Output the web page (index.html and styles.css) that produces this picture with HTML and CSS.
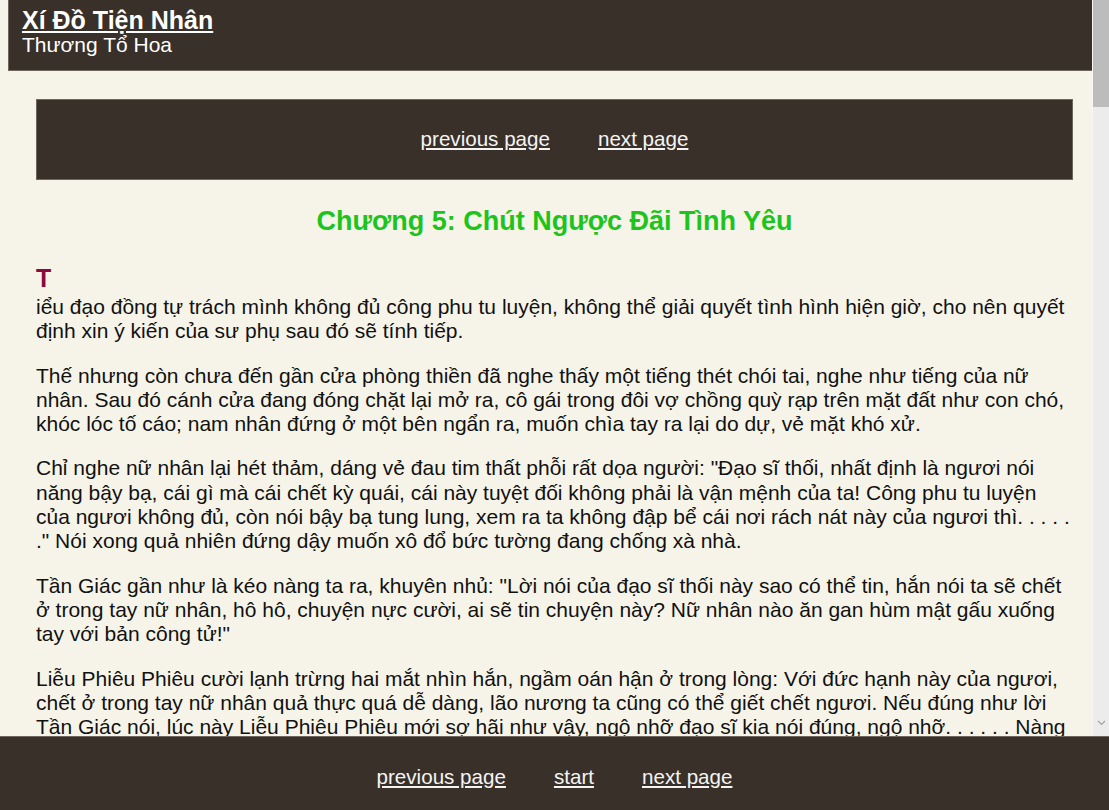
FILE: index.html
```html
<!DOCTYPE html>
<html lang="vi">
<head>
    <meta charset="UTF-8">
    <meta name="viewport" content="width=device-width, initial-scale=1.0">
    <title>Xí Đồ Tiện Nhân - Chương 5</title>
    <link rel="stylesheet" href="styles.css">
</head>
<body>
    <div class="viewport">
        <div class="page">
            <div class="header">
                <a class="book-title" href="#">Xí Đồ Tiện Nhân</a>
                <div class="author">Thương Tổ Hoa</div>
            </div>
            <div class="content">
                <div class="nav-box">
                    <a href="#">previous page</a>
                    <a href="#">next page</a>
                </div>
                <h2 class="chapter-title">Chương 5: Chút Ngược Đãi Tình Yêu</h2>
                <div class="chapter">
                    <p><span class="dropcap">T</span>iểu đạo đồng tự trách mình không đủ công phu tu luyện, không thể giải quyết tình hình hiện giờ, cho nên quyết định xin ý kiến của sư phụ sau đó sẽ tính tiếp.</p>
                    <p>Thế nhưng còn chưa đến gần cửa phòng thiền đã nghe thấy một tiếng thét chói tai, nghe như tiếng của nữ nhân. Sau đó cánh cửa đang đóng chặt lại mở ra, cô gái trong đôi vợ chồng quỳ rạp trên mặt đất như con chó, khóc lóc tố cáo; nam nhân đứng ở một bên ngẩn ra, muốn chìa tay ra lại do dự, vẻ mặt khó xử.</p>
                    <p>Chỉ nghe nữ nhân lại hét thảm, dáng vẻ đau tim thất phỗi rất dọa người: "Đạo sĩ thối, nhất định là ngươi nói năng bậy bạ, cái gì mà cái chết kỳ quái, cái này tuyệt đối không phải là vận mệnh của ta! Công phu tu luyện của ngươi không đủ, còn nói bậy bạ tung lung, xem ra ta không đập bể cái nơi rách nát này của ngươi thì. . . . . ." Nói xong quả nhiên đứng dậy muốn xô đổ bức tường đang chống xà nhà.</p>
                    <p>Tần Giác gần như là kéo nàng ta ra, khuyên nhủ: "Lời nói của đạo sĩ thối này sao có thể tin, hắn nói ta sẽ chết ở trong tay nữ nhân, hô hô, chuyện nực cười, ai sẽ tin chuyện này? Nữ nhân nào ăn gan hùm mật gấu xuống tay với bản công tử!"</p>
                    <p>Liễu Phiêu Phiêu cười lạnh trừng hai mắt nhìn hắn, ngầm oán hận ở trong lòng: Với đức hạnh này của ngươi, chết ở trong tay nữ nhân quả thực quá dễ dàng, lão nương ta cũng có thể giết chết ngươi. Nếu đúng như lời Tần Giác nói, lúc này Liễu Phiêu Phiêu mới sợ hãi như vậy, ngộ nhỡ đạo sĩ kia nói đúng, ngộ nhỡ. . . . . . Nàng không dám nghĩ tiếp nữa.</p>
                    <p>Tiểu đạo đồng đứng ở ngoài cửa, nhìn hai người kia ồn ào một hồi lâu, cuối cùng cũng không biết nên làm thế nào cho phải, đành phải lặng lẽ lui ra ngoài sân.</p>
                </div>
            </div>
        </div>
        <div class="scrollbar">
            <div class="scroll-thumb"></div>
            <svg class="scroll-arrow" width="9" height="6" viewBox="0 0 9 6">
                <path d="M1 1 L4.5 4.5 L8 1" fill="none" stroke="#a3a3a3" stroke-width="1.2"/>
            </svg>
        </div>
    </div>
    <div class="footer">
        <a href="#">previous page</a>
        <a href="#">start</a>
        <a href="#">next page</a>
    </div>
</body>
</html>
```

FILE: styles.css
```css
html, body {
    margin: 0;
    height: 100%;
}
body {
    font-family: "Liberation Sans", Arial, sans-serif;
    background-color: #f6f4e9;
    color: #111;
    display: flex;
    flex-direction: column;
    overflow: hidden;
}
.viewport {
    flex: 1;
    min-height: 0;
    display: flex;
}
.page {
    flex: 1;
    min-width: 0;
    overflow: hidden;
    padding-left: 8px;
}
.scrollbar {
    width: 17px;
    background-color: #ececec;
    border-left: 1px solid #f6f6f6;
    box-sizing: border-box;
    display: flex;
    flex-direction: column;
    align-items: center;
    justify-content: space-between;
    padding-bottom: 10px;
}
.scroll-thumb {
    width: 100%;
    height: 107px;
    background-color: #bcbcbc;
}
.header {
    background-color: #39302a;
    padding: 6px 13px 14px;
    border-bottom: 1px solid #6e665c;
    border-left: 1px solid #6e665c;
}
.book-title {
    color: #fff;
    font-size: 25px;
    font-weight: bold;
    line-height: 28px;
}
.author {
    color: #fff;
    font-size: 21px;
    line-height: 22px;
}
.content {
    padding: 28px 19px 40px 28px;
}
.nav-box {
    background-color: #39302a;
    border: 1px solid #6e665c;
    height: 79px;
    display: flex;
    justify-content: center;
    align-items: center;
    gap: 48px;
}
.nav-box a, .footer a {
    color: #f4f4f4;
    font-size: 20.6px;
}
.nav-box a {
    margin-top: -2px;
}
.chapter-title {
    text-align: center;
    color: #1cc41c;
    font-size: 27px;
    margin: 26px 0 24px;
}
.chapter p {
    font-size: 21px;
    line-height: 24.3px;
    margin: 0 0 20px;
}
.dropcap {
    display: block;
    color: #8a0a3e;
    font-size: 25px;
    font-weight: bold;
    line-height: 34px;
    margin-top: 12px;
}
.footer {
    height: 74px;
    background-color: #39302a;
    border-top: 1px solid #6e665c;
    display: flex;
    justify-content: center;
    align-items: center;
    gap: 48px;
    padding-top: 6px;
    box-sizing: border-box;
}
```
